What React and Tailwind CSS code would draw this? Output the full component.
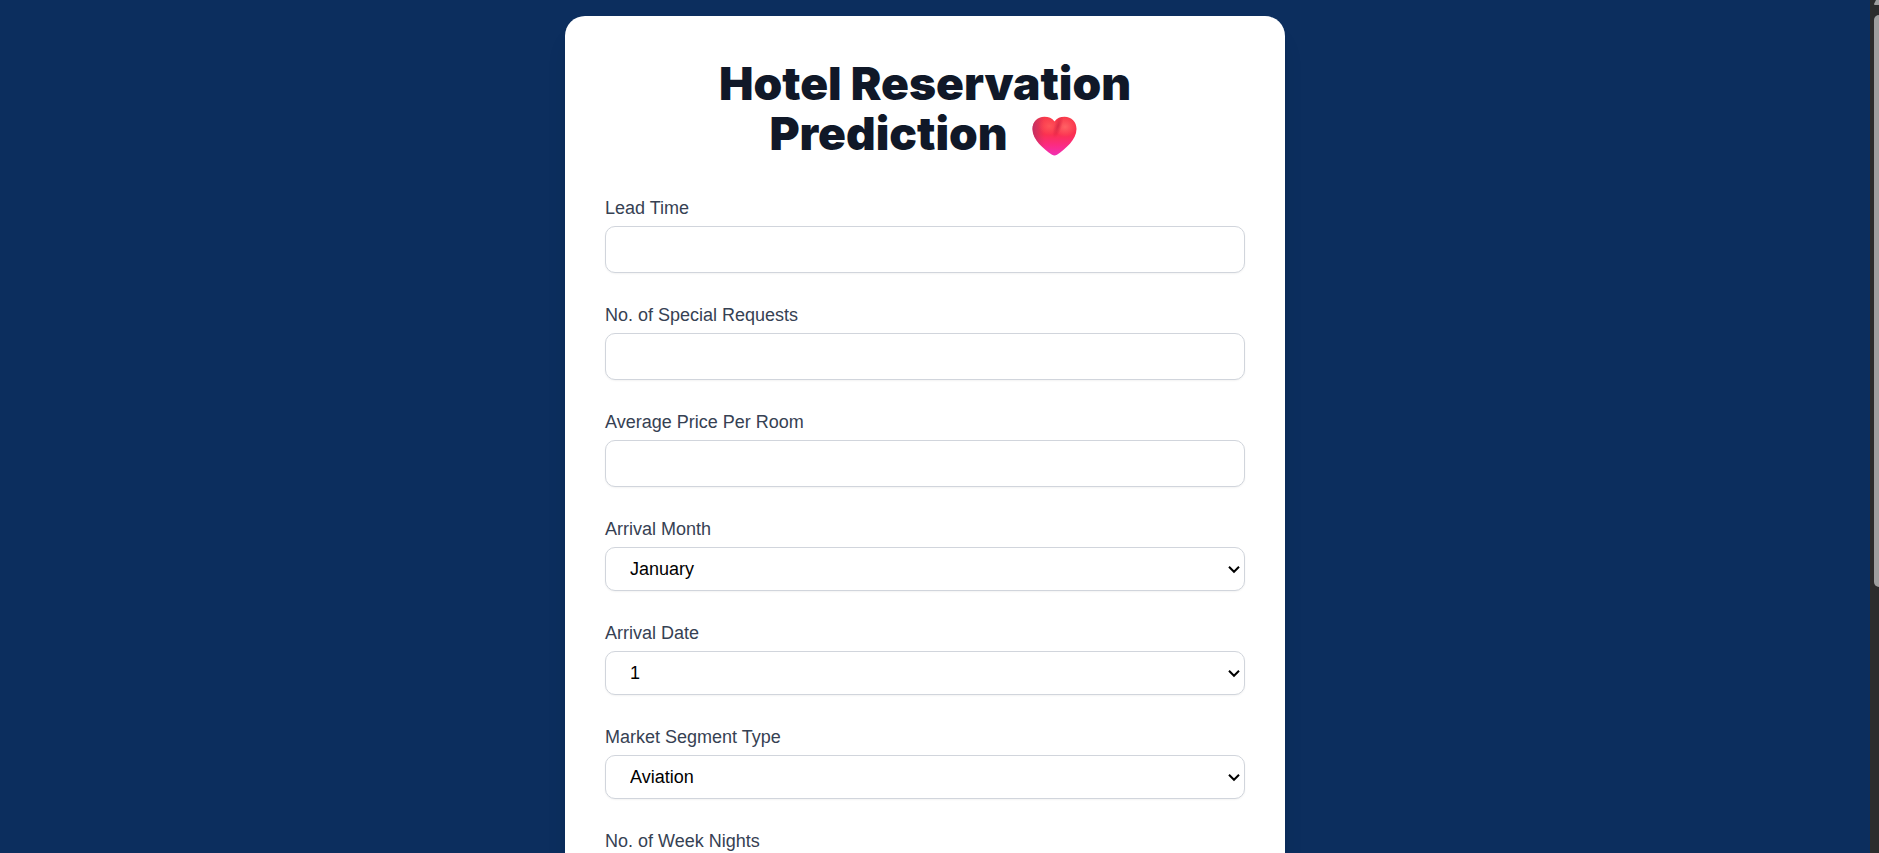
import { useId } from "react";

const months = [
  "January", "February", "March", "April", "May", "June",
  "July", "August", "September", "October", "November", "December",
];
const dates = Array.from({ length: 31 }, (_, i) => String(i + 1));
const segments = ["Aviation", "Complementary", "Corporate", "Offline", "Online"];

const labelClass = "block text-[18px] leading-[25px] text-gray-700";
const controlClass =
  "mt-[5px] block w-full rounded-[10px] border border-gray-300 bg-white px-6 text-[18px] text-black shadow-xs";

function NumberField({ label }) {
  const id = useId();
  return (
    <div>
      <label htmlFor={id} className={labelClass}>{label}</label>
      <input id={id} type="text" inputMode="numeric" className={`${controlClass} h-[47px]`} />
    </div>
  );
}

function SelectField({ label, options }) {
  const id = useId();
  return (
    <div>
      <label htmlFor={id} className={labelClass}>{label}</label>
      <div className="relative">
        <select id={id} className={`${controlClass} h-11 appearance-none`}>
          {options.map((o) => (
            <option key={o}>{o}</option>
          ))}
        </select>
        <svg
          className="pointer-events-none absolute inset-y-0 right-[5px] my-auto h-3 w-3"
          viewBox="0 0 12 12"
          fill="none"
          stroke="black"
          strokeWidth="2"
          aria-hidden="true"
        >
          <path d="M1 3.8 6 8.8l5-5" />
        </svg>
      </div>
    </div>
  );
}

function Heart() {
  return (
    <svg className="mr-1 ml-6 inline-block h-10 w-[45px] align-[-6px]" viewBox="0 0 45 40" role="img" aria-label="Heart">
      <defs>
        <linearGradient id="heart-base" x1="0" y1="0" x2="0" y2="1">
          <stop offset="0" stopColor="#f93a4a" />
          <stop offset="0.45" stopColor="#fb3150" />
          <stop offset="0.75" stopColor="#fb2b85" />
          <stop offset="1" stopColor="#f030b4" />
        </linearGradient>
        <radialGradient id="heart-left" cx="0.38" cy="0.24" r="0.24">
          <stop offset="0" stopColor="#ff5458" />
          <stop offset="1" stopColor="#ff5458" stopOpacity="0" />
        </radialGradient>
        <radialGradient id="heart-right" cx="0.74" cy="0.26" r="0.26">
          <stop offset="0" stopColor="#ff6264" />
          <stop offset="1" stopColor="#ff6264" stopOpacity="0" />
        </radialGradient>
        <radialGradient
          id="heart-cleft"
          gradientUnits="userSpaceOnUse"
          cx="0"
          cy="0"
          r="1"
          gradientTransform="translate(26 10) rotate(18) scale(4 13)"
        >
          <stop offset="0" stopColor="#cf1f40" stopOpacity="0.75" />
          <stop offset="1" stopColor="#d42040" stopOpacity="0" />
        </radialGradient>
        <linearGradient id="heart-edge" x1="0" y1="0" x2="1" y2="0">
          <stop offset="0" stopColor="#b5306a" stopOpacity="0.85" />
          <stop offset="0.28" stopColor="#c93060" stopOpacity="0" />
        </linearGradient>
      </defs>
      {["heart-base", "heart-edge", "heart-left", "heart-right", "heart-cleft"].map((g) => (
        <path
          key={g}
          fill={`url(#${g})`}
          d="M22.500 5.500C20 2 16.500.8 12.500.8 5.500.8.5 6 .5 13c0 10.500 11 20 19.500 25.700 1.600 1.100 3.400 1.100 5 0C33.500 33 44.500 23.500 44.500 13 44.500 6 39.500.8 32.500.8c-4 0-7.500 1.200-10 4.700Z"
        />
      ))}
    </svg>
  );
}

export default function App() {
  return (
    <div className="flex h-screen overflow-hidden bg-[#0c2e5e] font-['Liberation_Sans',Arial,sans-serif]">
      <main className="flex-1 overflow-y-auto py-4 pr-9 pl-4 [scrollbar-width:none]">
        <form className="mx-auto max-w-[720px] rounded-[20px] bg-white p-10 shadow-xl">
          <h1 className="pt-0.5 text-center font-['Inter',sans-serif] text-[46px] leading-[50px] font-black text-gray-900">
            Hotel Reservation
            <br />
            Prediction
            <Heart />
          </h1>
          <div className="mt-[38px] flex flex-col gap-[30px]">
            <NumberField label="Lead Time" />
            <NumberField label="No. of Special Requests" />
            <NumberField label="Average Price Per Room" />
            <SelectField label="Arrival Month" options={months} />
            <SelectField label="Arrival Date" options={dates} />
            <SelectField label="Market Segment Type" options={segments} />
            <NumberField label="No. of Week Nights" />
          </div>
        </form>
      </main>
      <div className="flex w-[9px] flex-col items-end overflow-hidden bg-[#2c2c2c]" aria-hidden="true">
        <svg className="h-[15px] w-[5px] shrink-0" viewBox="0 0 5 15">
          <path d="M5 0H2L0 4q0 1 1 1h4Z" fill="#9f9f9f" />
        </svg>
        <div className="h-[67%] w-[5px] rounded-l-[5px] bg-[#9f9f9f]" />
      </div>
    </div>
  );
}
